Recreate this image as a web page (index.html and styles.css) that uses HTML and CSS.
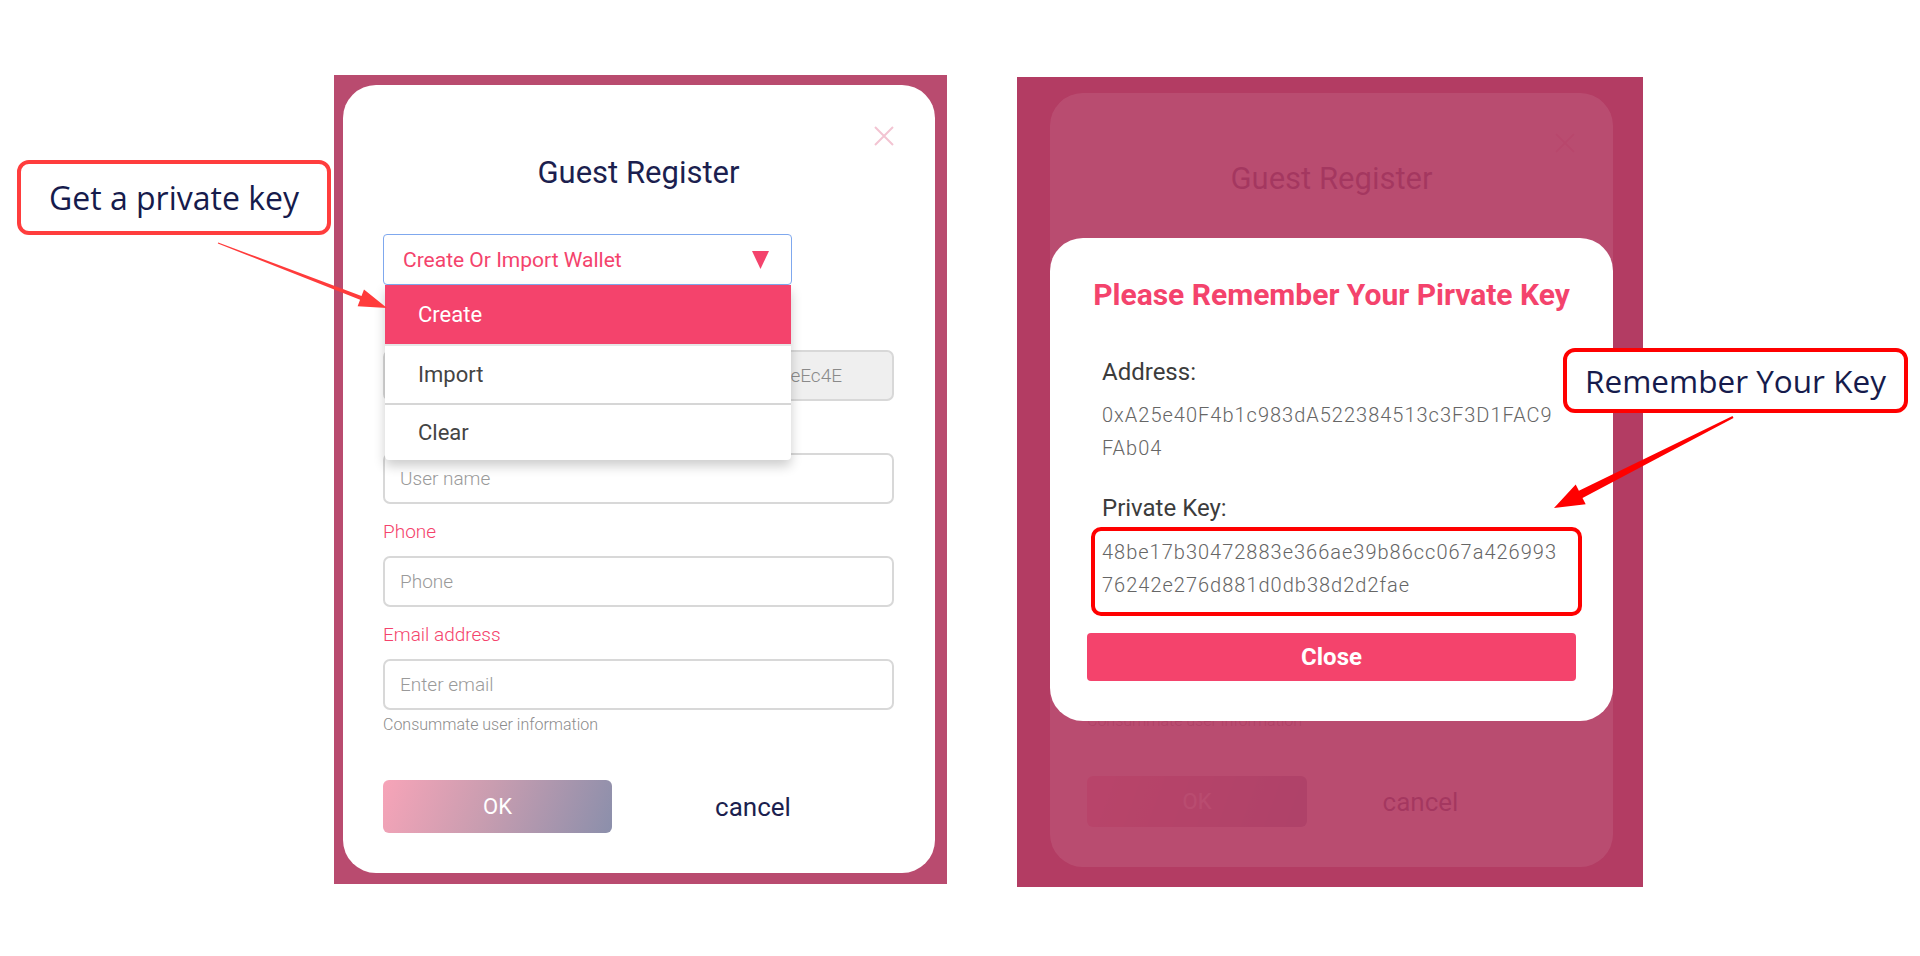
FILE: index.html
```html
<!DOCTYPE html>
<html lang="en">
<head>
<meta charset="utf-8">
<title>Guest Register – private key</title>
<link rel="stylesheet" href="styles.css">
</head>
<body>
<div class="stage">
  <section class="panel panel-left">
    <div class="modal">
      <span class="modal-close" aria-label="close">
        <svg width="20" height="20" viewBox="0 0 20 20"><path d="M1 1 L19 19 M19 1 L1 19" stroke="currentColor" stroke-width="2" fill="none"/></svg>
      </span>
      <h2 class="modal-title">Guest Register</h2>
      <div class="select-wrap">
        <div class="select">
          <span>Create Or Import Wallet</span>
          <svg class="select-caret" width="17" height="18" viewBox="0 0 17 18"><polygon points="0,0 17,0 8.5,18" fill="currentColor"/></svg>
        </div>
        <ul class="dropdown">
          <li class="dropdown-item is-active">Create</li>
          <li class="dropdown-item">Import</li>
          <li class="dropdown-item">Clear</li>
        </ul>
      </div>
      <div class="field field-nolabel field-first">
        <div class="input input-disabled">0x3F8a1c7D92bE04a5C6f17E2d908B4c35a1deEc4E</div>
      </div>
      <div class="field field-nolabel">
        <input class="input" placeholder="User name">
      </div>
      <div class="field">
        <label class="field-label">Phone</label>
        <input class="input" placeholder="Phone">
      </div>
      <div class="field">
        <label class="field-label">Email address</label>
        <input class="input" placeholder="Enter email">
      </div>
      <p class="hint">Consummate user information</p>
      <div class="footer">
        <button class="btn-ok">OK</button>
        <button class="btn-cancel">cancel</button>
      </div>
    </div>
  </section>

  <section class="panel panel-right">
    <div class="modal modal-back">
      <span class="modal-close modal-close-back">
        <svg width="20" height="20" viewBox="0 0 20 20"><path d="M1 1 L19 19 M19 1 L1 19" stroke="currentColor" stroke-width="2" fill="none"/></svg>
      </span>
      <h2 class="modal-title modal-title-back">Guest Register</h2>
      <div class="modal-spacer"></div>
      <p class="hint">Consummate user information</p>
      <div class="footer footer-back">
        <button class="btn-ok btn-ok-back">OK</button>
        <button class="btn-cancel">cancel</button>
      </div>
    </div>
    <div class="overlay"></div>
    <div class="popup">
      <h3 class="popup-title">Please Remember Your Pirvate Key</h3>
      <div class="kv-label">Address:</div>
      <div class="kv-value kv-address">0xA25e40F4b1c983dA522384513c3F3D1FAC9FAb04</div>
      <div class="kv-label kv-label-key">Private Key:</div>
      <div class="kv-value kv-key">48be17b30472883e366ae39b86cc067a42699376242e276d881d0db38d2d2fae</div>
      <button class="popup-close">Close</button>
    </div>
  </section>
</div>

<div class="callout callout-left">Get a private key</div>
<div class="callout callout-right">Remember Your Key</div>

<svg class="arrows" width="1920" height="956" viewBox="0 0 1920 956">
  <polygon fill="#ff3b3b" points="218.2,242.5 361.5,296.0 364.0,289.5 387,308 357.6,306.3 360.1,299.8 217.8,243.5"/>
  <polygon fill="#ff0000" points="1732.5,416.1 1578.9,490.8 1575.7,484.6 1554,508 1585.7,504.2 1582.5,498.0 1733.5,417.9"/>
</svg>
</body>
</html>
```

FILE: styles.css
```css
* { box-sizing: border-box; }

html, body {
  margin: 0;
  padding: 0;
}

body {
  width: 1920px;
  height: 956px;
  overflow: hidden;
  position: relative;
  background: #ffffff;
  font-family: Roboto, "Liberation Sans", Arial, sans-serif;
}

.light {
  font-family: "Roboto Light", Roboto, "Liberation Sans", Arial, sans-serif;
}

.stage {
  display: flex;
  align-items: flex-start;
  gap: 70px;
  padding: 75px 0 0 334px;
}

/* ---------- panels ---------- */
.panel {
  position: relative;
  background: #b94b6f;
  display: flex;
}

.panel-left {
  width: 613px;
  height: 809px;
  padding: 10px 12px 11px 9px;
}

.panel-right {
  width: 626px;
  height: 810px;
  margin-top: 2px;
  padding: 16px 30px 20px 33px;
}

/* ---------- modal ---------- */
.modal {
  position: relative;
  flex: 1;
  background: #ffffff;
  border-radius: 33px;
  padding: 72px 41px 40px 40px;
  display: flex;
  flex-direction: column;
}

.modal-close {
  position: absolute;
  top: 41px;
  right: 41px;
  width: 20px;
  height: 20px;
  color: #f3c4d2;
  display: block;
}
.modal-close svg { display: block; }

.modal-title {
  margin: 0 0 45px;
  font-size: 31px;
  line-height: 32px;
  font-weight: 400;
  color: #1c1f4f;
  text-align: center;
}

/* ---------- select ---------- */
.select-wrap {
  position: relative;
  width: 409px;
  margin-bottom: 13px;
}

.select {
  height: 51px;
  border: 1px solid #7fa8ee;
  border-radius: 4px;
  padding: 0 22px 0 19px;
  display: flex;
  align-items: center;
  justify-content: space-between;
  font-size: 21px;
  color: #f4436c;
}

.select-caret {
  color: #f4436c;
  display: block;
}

.dropdown {
  position: absolute;
  top: 100%;
  left: 2px;
  width: 406px;
  margin: 0;
  padding: 0;
  list-style: none;
  background: #ffffff;
  border-radius: 0 0 4px 4px;
  box-shadow: 0 6px 12px rgba(0, 0, 0, 0.2);
  z-index: 5;
}

.dropdown-item {
  height: 59px;
  padding-left: 33px;
  display: flex;
  align-items: center;
  font-size: 22px;
  color: #444444;
}
.dropdown-item + .dropdown-item { border-top: 2px solid #d6d6d6; }
.dropdown-item:last-child { height: 57px; }
.dropdown-item.is-active {
  background: #f4436c;
  color: #ffffff;
}
.dropdown-item.is-active + .dropdown-item { border-top-color: #e6e6e6; }

/* ---------- fields ---------- */
.field {
  display: flex;
  flex-direction: column;
  margin-top: 18px;
}
.field-nolabel { margin-top: 52px; }

.field-label {
  font-family: "Roboto Light", Roboto, "Liberation Sans", Arial, sans-serif;
  font-size: 19px;
  line-height: 20px;
  font-weight: 300;
  color: #f4436c;
  margin-bottom: 14px;
}

.input {
  height: 51px;
  width: 100%;
  border: 2px solid #d8d8d8;
  border-radius: 7px;
  padding: 0 14px 0 15px;
  font-family: "Roboto Light", Roboto, "Liberation Sans", Arial, sans-serif;
  font-size: 19px;
  font-weight: 300;
  color: #555555;
  background: #ffffff;
  outline: none;
}
.input::placeholder { color: #9a9a9a; font-weight: 300; }

.input-disabled {
  background: #efefef;
  display: flex;
  align-items: center;
  overflow: hidden;
  white-space: nowrap;
  padding-left: 18px;
  color: #8a8a8a;
}

.hint {
  margin: 6px 0 0;
  font-family: "Roboto Light", Roboto, "Liberation Sans", Arial, sans-serif;
  font-size: 16px;
  line-height: 18px;
  font-weight: 300;
  color: #8c8c8c;
}

/* ---------- footer ---------- */
.footer {
  display: grid;
  grid-template-columns: 229px 1fr;
  align-items: center;
  margin-top: 46px;
}

.btn-ok {
  height: 53px;
  border: none;
  border-radius: 6px;
  background: linear-gradient(110deg, #f7a4b8 0%, #c99db0 45%, #8b8fab 100%);
  color: #ffffff;
  font-family: inherit;
  font-size: 22px;
  font-weight: 400;
}

.btn-cancel {
  border: none;
  background: none;
  font-family: inherit;
  font-size: 26px;
  color: #1c1f4f;
  justify-self: center;
}

/* ---------- right panel (background modal + overlay) ---------- */
.modal-back {
  padding: 70px 37px 40px 37px;
}
.modal-close-back { top: 40px; right: 38px; }
.modal-spacer { flex: 1; }
.footer-back { grid-template-columns: 220px 1fr; }
.footer-back .btn-cancel { margin-right: 42px; }
.btn-ok-back { height: 51px; }

.overlay {
  position: absolute;
  inset: 0;
  background: rgba(178, 58, 98, 0.91);
}

.popup {
  position: absolute;
  top: 161px;
  left: 33px;
  right: 30px;
  background: #ffffff;
  border-radius: 33px;
  padding: 39px 37px 40px;
  display: flex;
  flex-direction: column;
}

.popup-title {
  margin: 0 0 44px;
  font-size: 30px;
  line-height: 36px;
  font-weight: 700;
  color: #f4436c;
  text-align: center;
  white-space: nowrap;
}

.kv-label {
  padding: 0 15px;
  font-size: 24px;
  line-height: 30px;
  color: #3c3c3c;
  margin-bottom: 12px;
}
.kv-label-key { margin-bottom: 13px; }

.kv-value {
  width: 456px;
  margin-left: 15px;
  font-family: "Roboto Light", Roboto, "Liberation Sans", Arial, sans-serif;
  font-size: 20px;
  line-height: 33px;
  font-weight: 300;
  letter-spacing: 1px;
  color: #666666;
  word-break: break-all;
}
.kv-address { margin-bottom: 28px; }

.kv-key { position: relative; }
.kv-key::after {
  content: "";
  position: absolute;
  left: -11px;
  right: -24px;
  top: -9px;
  bottom: -14px;
  border: 4px solid #ff0000;
  border-radius: 10px;
}

.popup-close {
  margin-top: 31px;
  height: 48px;
  width: 100%;
  border: none;
  border-radius: 4px;
  background: #f4436c;
  color: #ffffff;
  font-family: inherit;
  font-size: 24px;
  font-weight: 700;
}

/* ---------- annotations ---------- */
.callout {
  position: absolute;
  display: flex;
  align-items: center;
  justify-content: center;
  background: #ffffff;
  border-radius: 12px;
  font-family: "Open Sans", "Noto Sans", sans-serif;
  color: #161b4c;
  z-index: 10;
}

.callout-left {
  left: 17px;
  top: 160px;
  width: 314px;
  height: 75px;
  border: 4px solid #ff3d3d;
  font-size: 32px;
}

.callout-right {
  left: 1563px;
  top: 348px;
  width: 345px;
  height: 65px;
  border: 4px solid #ff0000;
  font-size: 31.5px;
}

.arrows {
  position: absolute;
  left: 0;
  top: 0;
  pointer-events: none;
  z-index: 11;
}
```
